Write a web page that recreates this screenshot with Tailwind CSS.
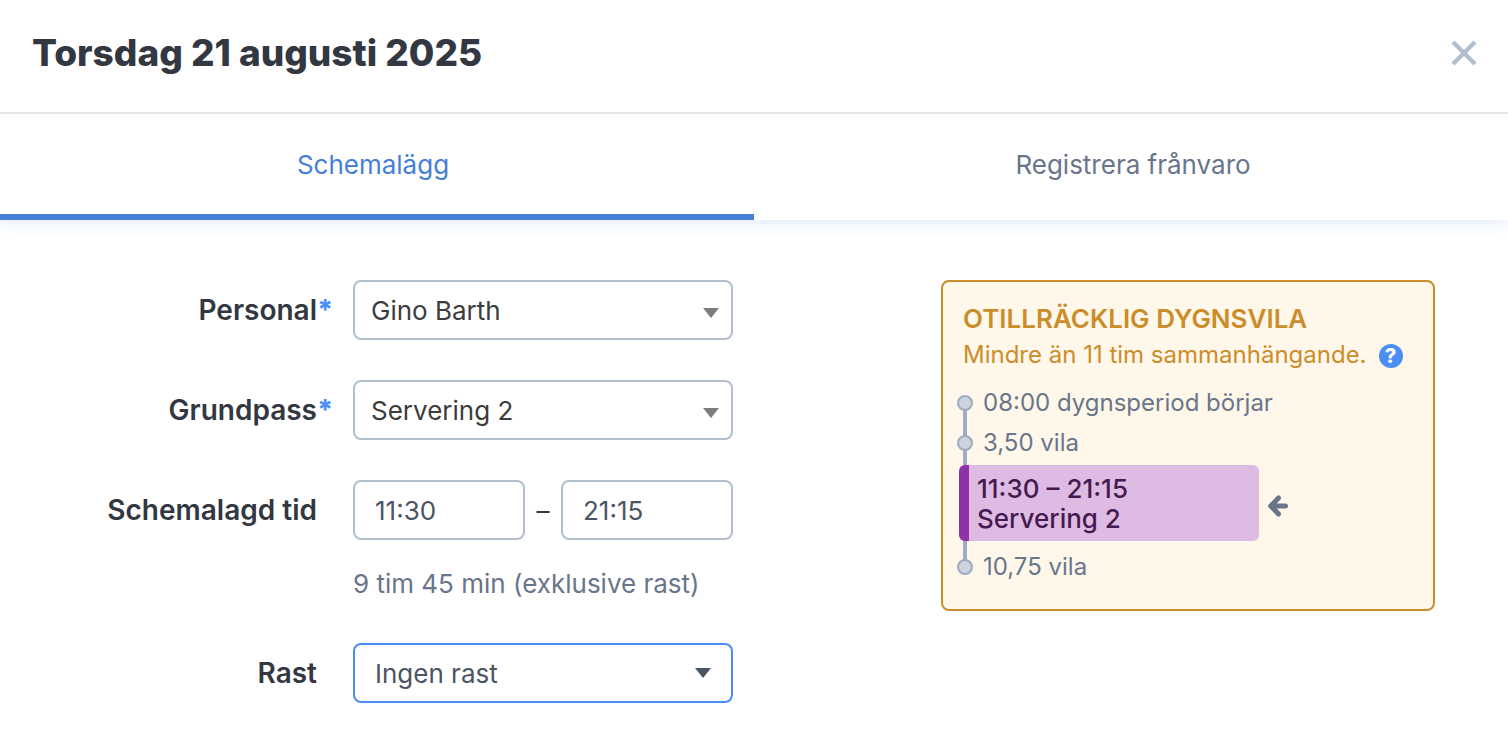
<!DOCTYPE html>
<html lang="sv">
<head>
<meta charset="UTF-8">
<meta name="viewport" content="width=device-width, initial-scale=1.0">
<title>Torsdag 21 augusti 2025</title>
<script src="https://cdn.jsdelivr.net/npm/@tailwindcss/browser@4"></script>
</head>
<body class="bg-white font-['Inter',sans-serif] text-[26px] text-[#323741]">
<header class="relative z-10 flex items-center justify-between h-[114px] pl-8 pr-[31px] pb-[6px] border-b-2 border-[#e6e6e6] bg-white">
<h1 class="text-[37px] leading-12 font-extrabold">Torsdag 21 augusti 2025</h1>
<button type="button" aria-label="Stäng" class="cursor-pointer">
<svg class="w-[26px] h-[26px]" viewBox="0 0 26 26" fill="none" stroke="#b2bfcf" stroke-width="4.400"><path d="M2 2l22 22M24 2L2 24"/></svg>
</button>
</header>
<nav class="flex h-[106px] shadow-[0_1px_18px_#dbe5f5]">
<a href="#schemalagg" class="w-1/2 flex items-center justify-center pr-2 border-b-6 border-[#457fd8] text-[#457fd8]">Schemalägg</a>
<a href="#franvaro" class="w-1/2 flex items-center justify-center pl-1 border-b-6 border-transparent text-[#69758a]">Registrera frånvaro</a>
</nav>
<main class="flex items-start pt-15 pb-7">
<form class="w-1/2 pr-[21px] grid grid-cols-[317px_minmax(0,1fr)] gap-x-9 gap-y-10">
<label for="personal" class="relative h-15 leading-15 text-right text-[28px] font-semibold">Personal<span class="absolute left-full font-extrabold text-[#4b8ff5]">*</span></label>
<div class="relative">
<select id="personal" class="appearance-none w-full h-15 pl-4 pr-12 border-2 border-[#b2bfcf] rounded-lg bg-white text-[#3c3c3c]"><option>Gino Barth</option></select>
<svg class="absolute right-[14px] top-7 w-4 h-[10px] pointer-events-none" viewBox="0 0 16 10" fill="#7d7d7d"><path d="M0 0h16L8 10z"/></svg>
</div>

<label for="grundpass" class="relative h-15 leading-15 text-right text-[28px] font-semibold">Grundpass<span class="absolute left-full font-extrabold text-[#4b8ff5]">*</span></label>
<div class="relative">
<select id="grundpass" class="appearance-none w-full h-15 pl-4 pr-12 border-2 border-[#b2bfcf] rounded-lg bg-white text-[#3c3c3c]"><option>Servering 2</option></select>
<svg class="absolute right-[14px] top-7 w-4 h-[10px] pointer-events-none" viewBox="0 0 16 10" fill="#7d7d7d"><path d="M0 0h16L8 10z"/></svg>
</div>

<label for="start" class="h-15 leading-15 text-right text-[28px] font-semibold">Schemalagd tid</label>
<div>
<div class="flex items-center">
<input id="start" type="text" value="11:30" class="flex-1 min-w-0 h-15 px-5 border-2 border-[#b2bfcf] rounded-lg text-[#4b5463]">
<span class="w-9 text-center">–</span>
<input type="text" value="21:15" aria-label="Sluttid" class="flex-1 min-w-0 h-15 px-5 border-2 border-[#b2bfcf] rounded-lg text-[#4b5463]">
</div>
<p class="mt-[26px] mb-px leading-9 text-[#69758a]">9 tim 45 min (exklusive rast)</p>
</div>

<label for="rast" class="h-15 leading-15 text-right text-[28px] font-semibold">Rast</label>
<div class="relative">
<select id="rast" class="appearance-none w-full h-15 pl-5 pr-12 border-2 border-[#4b8ff5] rounded-lg bg-white text-[#4b5463]"><option>Ingen rast</option></select>
<svg class="absolute right-[22px] top-[25px] w-4 h-[10px] pointer-events-none" viewBox="0 0 16 10" fill="#4b5463"><path d="M0 0h16L8 10z"/></svg>
</div>
</form>

<aside class="w-[494px] ml-auto mr-[73px] pt-[19px] pb-[22px] border-2 border-[#cb8d2a] rounded-lg bg-[#fff8ea] text-2xl text-[#69758a]">
<h2 class="px-5 text-[26px] leading-9 font-semibold text-[#cb8d2a]">OTILLRÄCKLIG DYGNSVILA</h2>
<div class="flex items-center gap-3 px-5 leading-9 text-[#cb8d2a]">
<p>Mindre än 11 tim sammanhängande.</p>
<button type="button" aria-label="Hjälp" class="flex items-center justify-center shrink-0 size-6 mt-[2px] rounded-full bg-[#4b8ff5] text-white text-xl leading-6 font-extrabold">?</button>
</div>
<ul class="relative mt-[10px] ml-[14px]">
<li class="absolute left-[6px] top-5 bottom-5 w-1 bg-[#9dacc1]" aria-hidden="true"></li>
<li class="relative flex items-center gap-[10px] leading-10"><span class="size-4 border-2 border-[#9dacc1] rounded-full bg-[#ccd3de]"></span>08:00 dygnsperiod börjar</li>
<li class="relative flex items-center gap-[10px] leading-10"><span class="size-4 border-2 border-[#9dacc1] rounded-full bg-[#ccd3de]"></span>3,50 vila</li>
<li class="relative flex items-center gap-[9px] mt-[2px] mb-[6px] ml-[2px]">
<div class="w-[300px] h-[76px] pt-[9px] pl-2 border-l-10 border-[#8f31a7] rounded-md bg-[#debbe3] text-[#461a50] text-[26px] leading-[30px] font-medium">
<p>11:30 – 21:15</p>
<p>Servering 2</p>
</div>
<svg class="w-5 h-[22px] mt-[6px]" viewBox="0 0 20 22" fill="#69758a" stroke="#69758a" stroke-width="5" stroke-linecap="round" stroke-linejoin="round"><path fill="none" d="M10.500 3L2.700 11l7.800 8M4 11h13.500"/><path stroke="none" d="M3 11l6-5v10z"/></svg>
</li>
<li class="relative flex items-center gap-[10px] leading-10"><span class="size-4 border-2 border-[#9dacc1] rounded-full bg-[#ccd3de]"></span>10,75 vila</li>
</ul>
</aside>
</main>
</body>
</html>
